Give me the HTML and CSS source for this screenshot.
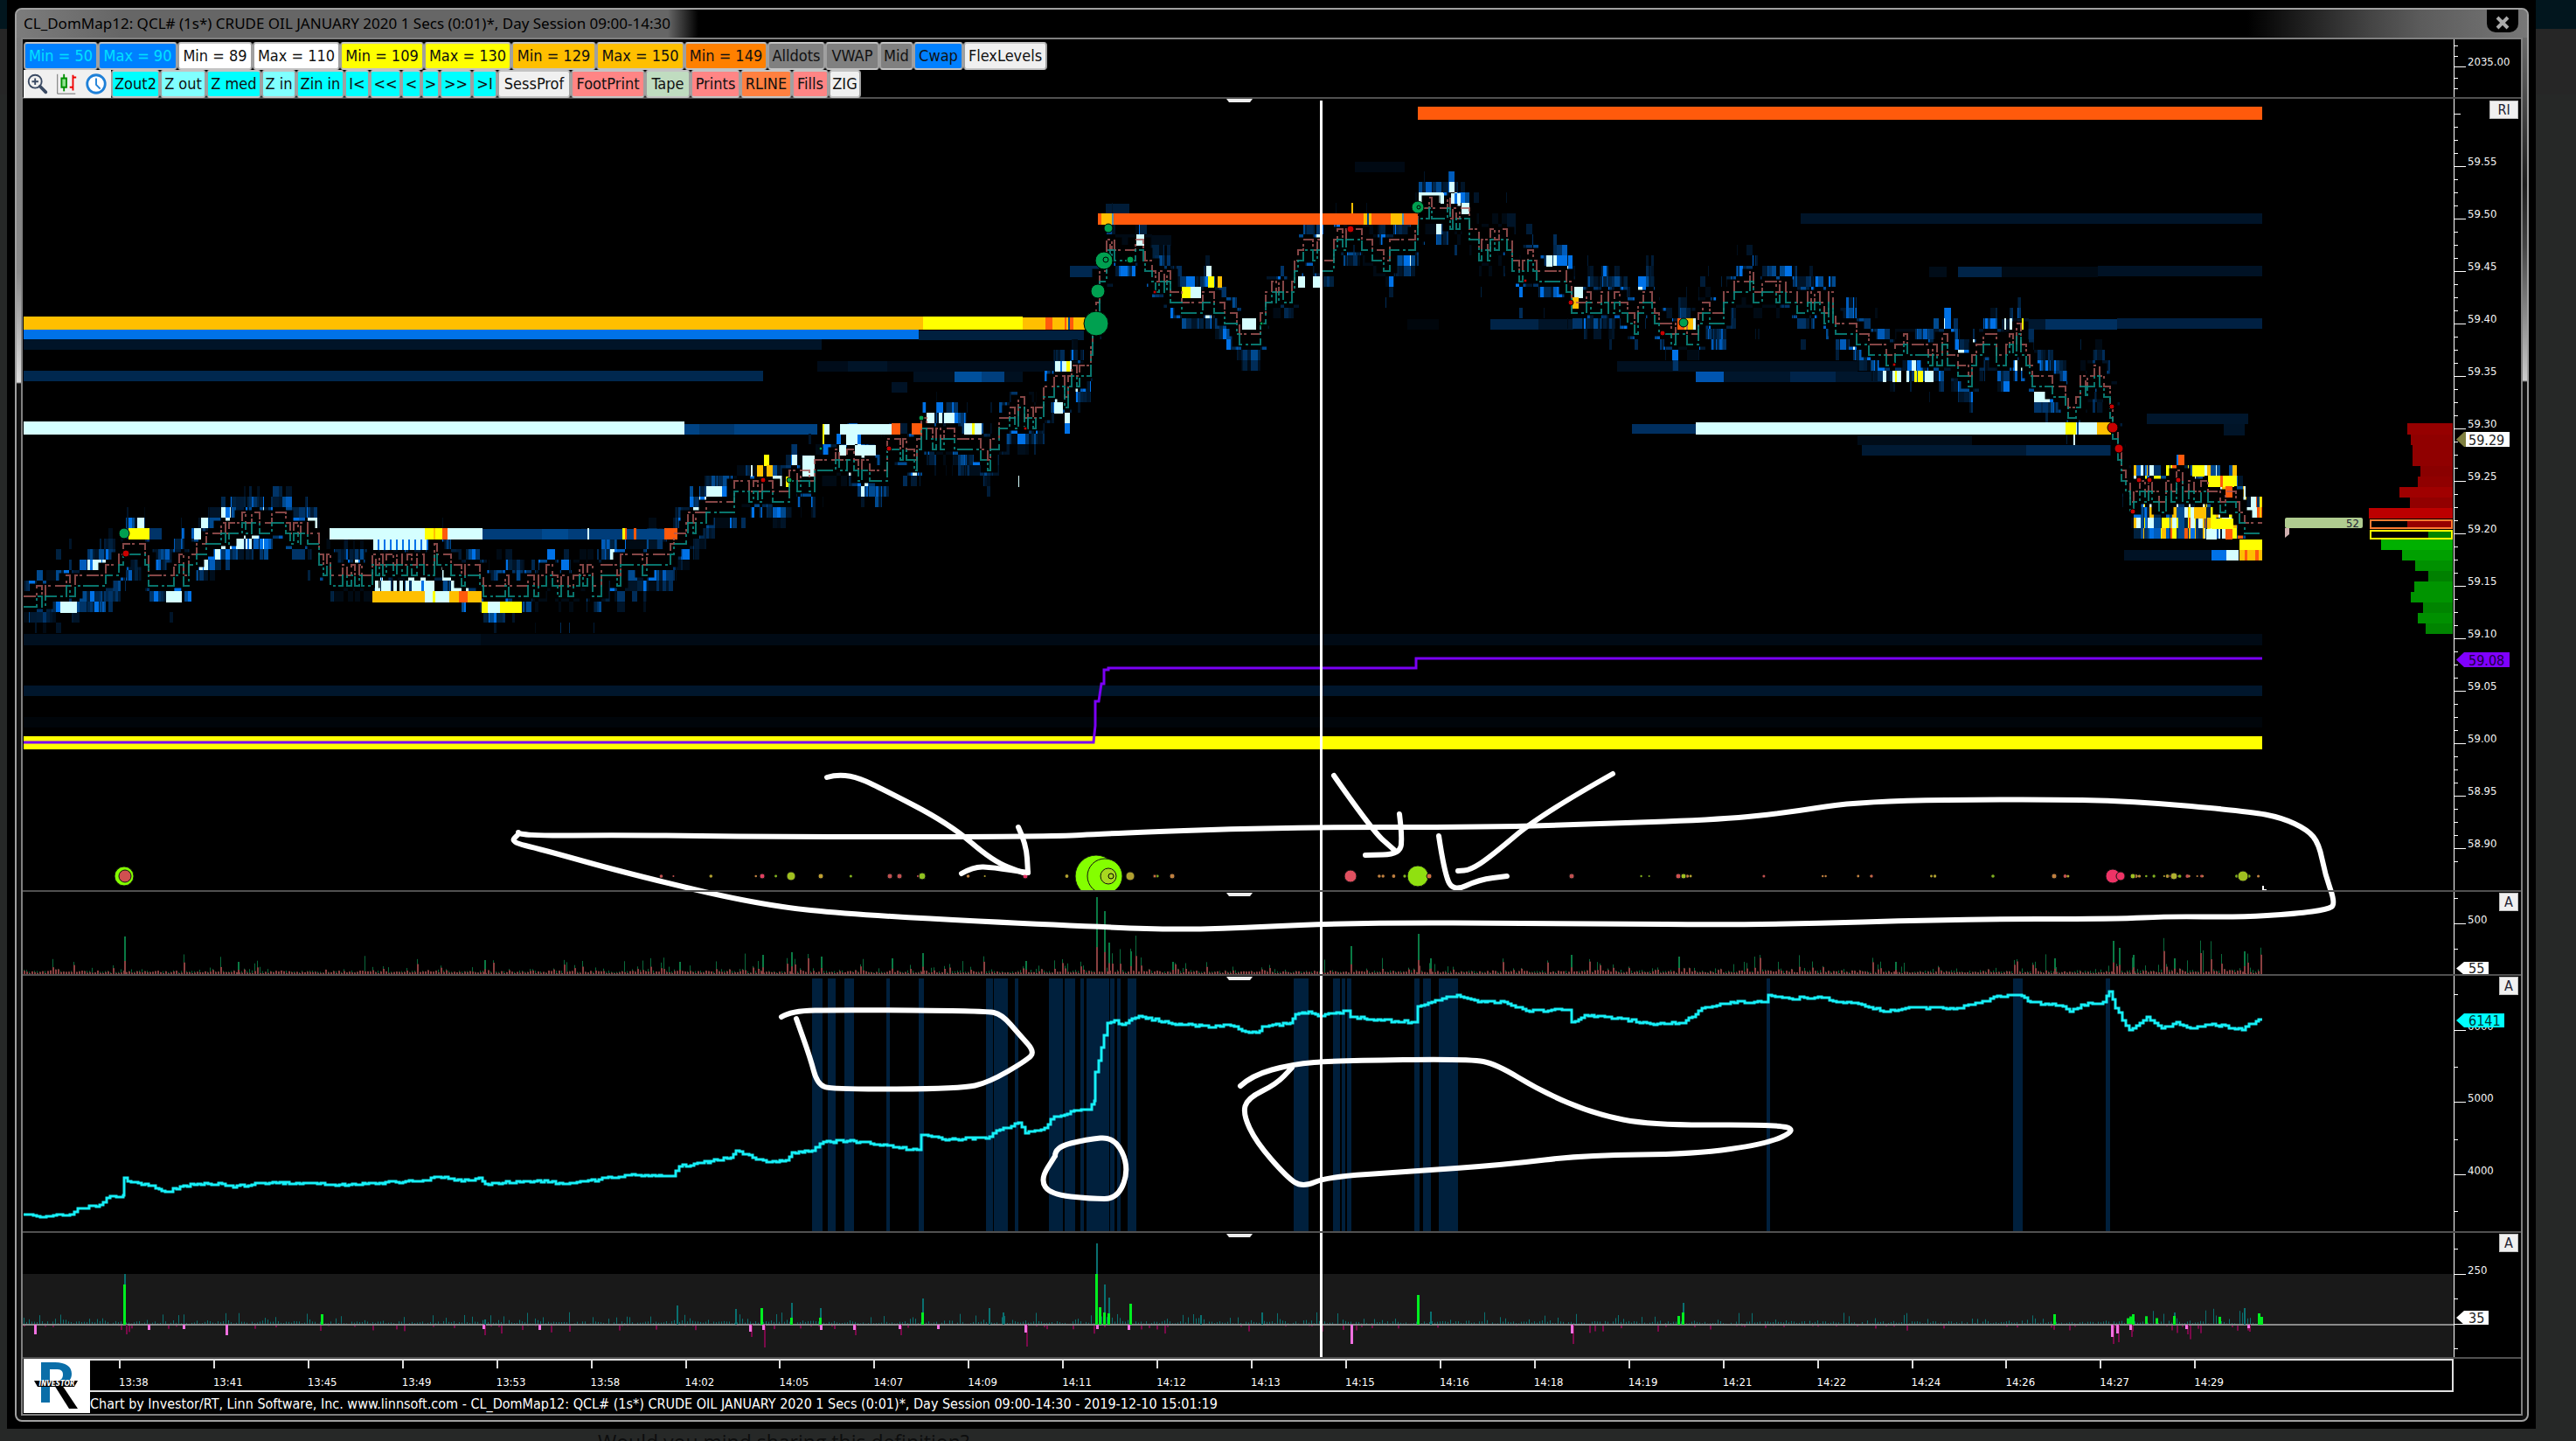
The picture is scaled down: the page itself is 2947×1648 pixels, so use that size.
FILE: index.html
```html
<!DOCTYPE html>
<html lang="en">
<head>
<meta charset="utf-8">
<title>CL_DomMap12</title>
<link rel="stylesheet" href="styles.css">
</head>
<body>
<div class="page">
  <div class="window">
    <div class="frame">
      <header class="titlebar">
        <h1 class="title">CL_DomMap12: QCL# (1s*) CRUDE OIL JANUARY 2020 1 Secs (0:01)*, Day Session 09:00-14:30</h1>
        <button class="close" aria-label="Close"><svg viewBox="0 0 16 16" width="16" height="16"><path d="M2 2 L14 14 M14 2 L2 14" stroke="#aaa" stroke-width="4"/></svg></button>
      </header>
      <main class="client">
        <div class="stack">
          <svg class="plot" id="plot" viewBox="26 45 2781 1509" preserveAspectRatio="none" aria-label="Order book heat map"></svg>
          <svg class="axis" id="axis" viewBox="2807 45 77 1509" preserveAspectRatio="none" aria-label="Scales"></svg>
          <section class="panel">
            <div class="toolbars">
              <div class="toolbar levels">
                <button class="blue">Min = 50</button><button class="blue">Max = 90</button><button class="white">Min = 89</button><button class="white">Max = 110</button><button class="yellow">Min = 109</button><button class="yellow">Max = 130</button><button class="gold">Min = 129</button><button class="gold">Max = 150</button><button class="orange">Min = 149</button><button class="gray">Alldots</button><button class="gray">VWAP</button><button class="gray">Mid</button><button class="cwap">Cwap</button><button class="light">FlexLevels</button>
              </div>
              <div class="toolbar tools">
                <button class="light icon" aria-label="Zoom"><svg viewBox="0 0 30 30" width="28" height="28"><circle cx="12" cy="12" r="8" fill="none" stroke="#3a4a63" stroke-width="2"/><path d="M12 8v8M8 12h8" stroke="#3a4a63" stroke-width="2"/><path d="M18 18l7 7" stroke="#3a4a63" stroke-width="4" stroke-linecap="round"/></svg></button>
                <button class="light icon" aria-label="Bars"><svg viewBox="0 0 30 30" width="28" height="28"><path d="M4 3v24h22" fill="none" stroke="#666" stroke-width="1"/><path d="M12 3v21" stroke="#009000" stroke-width="2"/><path d="M9 8h6v11h-6z" fill="#8fe08f" stroke="#009000" stroke-width="2"/><path d="M23 4v19M23 7h4M19 19h4" stroke="#f00000" stroke-width="2"/></svg></button>
                <button class="light icon" aria-label="Time"><svg viewBox="0 0 30 30" width="28" height="28"><circle cx="15" cy="15" r="11" fill="#fff" stroke="#1e80d8" stroke-width="3"/><path d="M15 8v8l5 5" fill="none" stroke="#1e80d8" stroke-width="2"/></svg></button>
                <button class="cyan">Zout2</button><button class="pale">Z out</button><button class="cyan">Z med</button><button class="pale">Z in</button><button class="cyan">Zin in</button><button class="cyan">I&lt;</button><button class="cyan">&lt;&lt;</button><button class="cyan">&lt;</button><button class="cyan">&gt;</button><button class="cyan">&gt;&gt;</button><button class="cyan">&gt;I</button><button class="light">SessProf</button><button class="pink">FootPrint</button><button class="sage">Tape</button><button class="pink">Prints</button><button class="coral">RLINE</button><button class="pink">Fills</button><button class="light">ZIG</button>
              </div>
            </div>
          </section>
          <section class="panel"><button class="corner wide">RI</button></section>
          <section class="panel"><button class="corner">A</button></section>
          <section class="panel"><button class="corner">A</button></section>
          <section class="panel"><button class="corner">A</button></section>
        </div>
        <footer class="footer">
          <svg class="logo" viewBox="0 0 76 62" width="76" height="62" aria-label="Investor/RT">
            <rect width="76" height="62" fill="#fff"/>
            <path d="M20 4h16c12 0 19 5 19 13 0 7-4 10-9 12H30v21H20z M30 12v13h7c5 0 8-2 8-7s-3-6-8-6z" fill="#0a6ea8" fill-rule="evenodd"/>
            <path d="M35 30h9l18 27h-10z" fill="#000"/>
            <path d="M12 25h50l-4 7H16z" fill="#000"/>
            <text x="38" y="31" text-anchor="middle" class="logo-text">INVESTOR</text>
          </svg>
          <ol class="times" id="times"></ol>
          <p class="credit">Chart by Investor/RT, Linn Software, Inc. www.linnsoft.com - CL_DomMap12: QCL# (1s*) CRUDE OIL JANUARY 2020 1 Secs (0:01)*, Day Session 09:00-14:30 - 2019-12-10 15:01:19</p>
        </footer>
      </main>
    </div>
  </div>
  <p class="question">Would you mind sharing this definition?</p>
</div>
<script src="chart.js"></script>
</body>
</html>
```
FILE: styles.css
```css
* { box-sizing: border-box; }
body { margin: 0; background: #262827; font-family: "DejaVu Sans Condensed", "DejaVu Sans", sans-serif; }
.page {
  height: 100vh; overflow: hidden; display: flex; flex-direction: column;
  padding: 0 46px 0 8px;
  background: linear-gradient(#02161e 0 33px, #262626 33px 108px, #262827 108px);
}
.window { flex: 1 1 0; display: flex; background: #000; padding: 9px 8px 8px 9px; min-width: 0; min-height: 0; }
.frame {
  flex: 1; min-width: 0; display: flex; flex-direction: column;
  border: 2px solid #a0a0a0; border-radius: 8px;
  background:
    linear-gradient(#777 0, #8a8a8a 300px, #ddd 426px, #101010 428px) left / 6px 100% no-repeat,
    linear-gradient(#777 0, #555 80px, #1c1c1c 200px, #444 270px, #ccc 424px, #101010 426px) right / 6px 100% no-repeat,
    #0c0c0c;
}
.titlebar {
  flex: none; height: 32px; display: flex; justify-content: space-between; align-items: center; padding-left: 8px;
  border-radius: 6px 6px 0 0;
  background: linear-gradient(90deg, #7c7c7c 0, #666 120px, #666 745px, rgba(30,30,30,0) 780px),
    linear-gradient(270deg, #777 0, #5c5c5c 120px, #444 180px, #000 320px), #050505;
}
.title { margin: 0; font: 400 17px/32px "Noto Sans", sans-serif; color: #000; white-space: nowrap; }
.close {
  width: 36px; height: 26px; padding: 3px 0 0; border: 0; margin-right: 10px; align-self: flex-start;
  border-radius: 0 0 10px 10px; background: #000; line-height: 0;
}
.client {
  flex: 1; min-height: 0; display: flex; flex-direction: column; margin: 0 5px 5px; border: 2px solid #808080; background: #000;
}
.stack {
  position: relative; flex: 1 1 0; min-height: 0; display: grid;
  grid-template-rows: minmax(0, 68fr) minmax(0, 907fr) minmax(0, 96fr) minmax(0, 294fr) minmax(0, 144fr);
}
.plot { position: absolute; left: 0; top: 0; width: calc(100% - 77px); height: 100%; }
.axis { position: absolute; right: 0; top: 0; width: 77px; height: 100%; }
.panel { position: relative; border-bottom: 2px solid #505050; display: flex; flex-direction: column; min-height: 0; }
.toolbars { padding: 3px 0 0 1px; }
.toolbar { display: grid; height: 32px; }
.levels { grid-template-columns: 85px 91px 86px 100px 96px 100px 97px 101px 95px 66px 62px 39px 57px 96px; }
.tools { grid-template-columns: 32px 34px 34px 56px 53px 63px 40px 55px 29px 36px 23px 21px 37px 29px 84px 85px 52px 57px 59px 42px 37px; }
.toolbar button {
  border: 2px solid #a8a8a8; border-color: #c4c4c4 #a0a0a0; border-radius: 4px; padding: 0; overflow: hidden; color: #111;
  font: 18px/26px "DejaVu Sans Condensed", "DejaVu Sans", sans-serif; white-space: nowrap;
  display: flex; justify-content: center; align-items: center;
}
.toolbar .icon { border: 0; border-radius: 0; }
.toolbar .blue { background: #0080ff; color: #00e0ff; }
.toolbar .cwap { background: #0080ff; }
.toolbar .white { background: #fff; }
.toolbar .yellow { background: #ff0; }
.toolbar .gold { background: #ffbf00; }
.toolbar .orange { background: #ff8000; }
.toolbar .gray { background: #808080; }
.toolbar .light { background: #f0f0f0; }
.toolbar .cyan { background: #0ff; }
.toolbar .pale { background: #80ffff; }
.toolbar .pink { background: #ff8585; }
.toolbar .sage { background: #c0dcc0; }
.toolbar .coral { background: #ff8040; }
.corner {
  align-self: flex-end; margin: 1px 3px 0 0; width: 22px; height: 21px; padding: 0;
  border: 1px solid #bbb; background: #f0f0f0; color: #223;
  font: 16px/18px "DejaVu Sans Condensed", "DejaVu Sans", sans-serif;
}
.wide { width: 33px; margin-top: 2px; }
.footer { flex: none; display: grid; grid-template: 38px 25px / 77px 1fr; }
.logo { grid-row: 1 / 3; margin-left: 1px; display: block; }
.logo-text { font: italic 700 8px "DejaVu Sans Condensed", sans-serif; fill: #fff; }
.times {
  display: flex; list-style: none; margin: 0 77px 0 0; padding: 0 0 0 33px;
  border: 2px solid #e0e0e0; border-left: 0;
}
.times::after { content: ""; flex: 187 0 0; }
.times li { flex: 108 0 0; min-width: 0; font-size: 13px; line-height: 14px; color: #fff; }
.times li::before { content: ""; display: block; width: 2px; height: 9px; margin-bottom: 9px; background: #ddd; }
.credit { margin: 0; color: #fff; font-size: 16px; line-height: 28px; white-space: nowrap; }
.question { flex: none; height: 14px; margin: 0 0 0 676px; font: 23px/30px "Open Sans", sans-serif; color: #0c0d0d; white-space: nowrap; }
.scale-text { font: 13px "DejaVu Sans Condensed", "DejaVu Sans", sans-serif; fill: #f4f4f4; }
.tag-text { font: 16px "DejaVu Sans Condensed", "DejaVu Sans", sans-serif; }
```
FILE: chart.js
```js
const plot = document.getElementById('plot');
const axis = document.getElementById('axis');
let seed = 20191210;
const rnd = () => {
  seed = (seed + 0x6D2B79F5) | 0;
  let t = Math.imul(seed ^ (seed >>> 15), 1 | seed);
  t = (t + Math.imul(t ^ (t >>> 7), 61 | t)) ^ t;
  return ((t ^ (t >>> 14)) >>> 0) / 4294967296;
};
const pick = list => list[Math.floor(rnd() * list.length)];
let out = '';
const rect = (x1, y1, x2, y2, c) => { out += `<rect x="${x1}" y="${y1}" width="${x2 - x1}" height="${y2 - y1}" fill="${c}"/>`; };
const line = (d, c, w = 2, extra = '') => { out += `<path d="${d}" fill="none" stroke="${c}" stroke-width="${w}" ${extra}/>`; };
const dot = (x, y, r, c, stroke = 'none') => { out += `<circle cx="${x}" cy="${y}" r="${r}" fill="${c}" stroke="${stroke}"/>`; };

const ICE = '#d5ffff', YEL = '#ffff00', GOLD = '#ffbf00', ORG = '#ff5a0c', BLUE = '#0072e8', MID = '#004a90', DEEP = '#00284f', NIGHT = '#001428';

/* resting liquidity: [x1, x2, y1, y2, colour] */
const bars = [
  [1622, 2588, 122, 137, ORG],
  [27, 1056, 362, 377, GOLD], [1056, 1170, 362, 377, YEL], [1170, 1242, 363, 377, GOLD], [1196, 1204, 363, 377, ORG], [1218, 1220, 363, 377, ORG], [1222, 1224, 363, 377, MID], [1224, 1228, 363, 377, ORG],
  [27, 1051, 377, 388, BLUE], [1051, 1240, 378, 389, '#00203f'],
  [27, 940, 388, 400, NIGHT], [935, 1240, 413, 425, '#000c1a'], [970, 1015, 413, 425, NIGHT],
  [27, 873, 424, 436, DEEP], [1045, 1170, 425, 437, '#001020'], [1092, 1123, 425, 437, '#00509c'], [1123, 1149, 425, 437, '#003f7e'],
  [1020, 1038, 437, 449, '#001225'],
  [27, 783, 482, 497, ICE], [783, 935, 485, 497, '#004384'], [800, 840, 485, 497, '#00386f'],
  [27, 2588, 725, 738, '#000a15'], [27, 550, 725, 738, '#001020'], [27, 2588, 784, 796, '#00162c'], [27, 2588, 820, 832, '#00050a'],
  [27, 2588, 842, 857, YEL],
  [1546, 1548, 232, 244, GOLD],
  [1265, 1292, 233, 244, '#001c38'], [1224, 1262, 304, 317, '#002850'], [1310, 1340, 269, 281, '#000c18'],
  [1550, 1607, 185, 197, '#000913'], [1610, 1646, 365, 377, '#00060c'],
  [2060, 2588, 244, 256, NIGHT], [2207, 2227, 305, 317, '#000c18'], [2240, 2290, 305, 317, '#002448'], [2290, 2400, 305, 317, '#000a14'], [2400, 2588, 304, 316, '#001225'],
  [2290, 2340, 365, 377, '#001830'], [2340, 2422, 365, 377, '#003060'], [2422, 2588, 364, 376, '#002042'],
  [1705, 1760, 365, 377, '#002448'], [1760, 1800, 365, 377, NIGHT],
  [1850, 2125, 413, 425, '#000f1f'], [1940, 1972, 425, 437, '#0055b0'], [1972, 2155, 425, 437, '#00162c'], [2048, 2100, 425, 437, '#00244a'],
  [1867, 1940, 485, 496, '#002f60'],
  [2125, 2256, 498, 509, '#000c18'], [2130, 2320, 509, 521, '#001a34'], [2318, 2418, 509, 521, '#002850'],
  [2456, 2572, 473, 485, '#00162c'], [2544, 2568, 485, 498, NIGHT]
];
bars.forEach(([a, b, c, d, e]) => rect(a, c, b, d, e));

/* best offer by time, in ticks below 59.40 */
const ask = [[27,26],[42,25],[48,26],[52,25],[76,24],[80,25],[86,24],[121,23],[136,22],[141,21],[166,22],[170,24],[199,23],[205,22],[210,24],[216,22],[225,21],[236,20],[253,19],[258,20],[262,19],[277,18],[281,19],[288,18],[297,19],[311,18],[327,19],[332,20],[336,19],[341,20],[344,19],[352,20],[365,22],[370,23],[374,22],[378,24],[392,23],[397,24],[402,23],[406,24],[411,23],[414,24],[426,22],[430,23],[434,22],[438,23],[442,22],[450,23],[454,22],[460,23],[466,22],[471,23],[477,22],[485,23],[497,21],[500,22],[516,23],[528,24],[532,23],[549,24],[553,25],[578,24],[582,25],[604,24],[611,25],[616,24],[625,23],[632,24],[638,25],[642,24],[650,25],[656,24],[663,23],[667,24],[672,23],[678,25],[688,23],[706,24],[710,22],[735,23],[740,22],[767,21],[771,20],[785,19],[787,18],[793,19],[796,18],[808,17],[840,15],[857,16],[862,15],[867,16],[872,15],[884,16],[903,14],[912,15],[916,14],[926,15],[932,13],[936,13],[956,12],[960,13],[969,12],[977,13],[982,14],[986,13],[995,14],[1015,11],[1030,12],[1033,11],[1037,12],[1046,13],[1049,11],[1054,9],[1060,10],[1067,11],[1071,10],[1076,11],[1080,10],[1092,11],[1122,12],[1130,13],[1133,11],[1143,9],[1155,8],[1161,9],[1165,7],[1172,9],[1176,8],[1182,9],[1185,8],[1194,6],[1206,5],[1218,7],[1222,5],[1226,4],[1232,5],[1235,4],[1248,2],[1250,0],[1254,-2],[1258,-5],[1266,-8],[1270,-7],[1272,-8],[1275,-7],[1299,-8],[1308,-7],[1310,-6],[1318,-5],[1322,-4],[1326,-5],[1332,-4],[1335,-5],[1339,-3],[1352,-2],[1376,-3],[1389,-2],[1401,-1],[1415,0],[1418,1],[1442,-1],[1448,-3],[1455,-4],[1460,-3],[1463,-4],[1468,-3],[1478,-4],[1481,-6],[1485,-7],[1491,-8],[1502,-7],[1507,-8],[1512,-6],[1526,-8],[1530,-9],[1536,-8],[1540,-9],[1558,-8],[1570,-7],[1583,-6],[1590,-8],[1619,-9],[1622,-11],[1635,-12],[1638,-11],[1656,-12],[1659,-10],[1662,-11],[1666,-10],[1670,-11],[1681,-9],[1692,-7],[1695,-8],[1702,-7],[1705,-9],[1710,-8],[1715,-9],[1724,-8],[1730,-6],[1738,-5],[1742,-6],[1748,-7],[1754,-6],[1758,-5],[1792,-4],[1798,-2],[1811,-2],[1815,-3],[1820,-2],[1832,-3],[1840,-2],[1847,-3],[1853,-2],[1862,-1],[1866,-1],[1870,0],[1874,-2],[1880,-3],[1890,-2],[1893,-1],[1898,0],[1912,1],[1917,0],[1930,1],[1943,-1],[1948,-2],[1956,-1],[1972,-3],[1984,-4],[2002,-5],[2006,-3],[2016,-4],[2032,-3],[2036,-4],[2043,-3],[2056,-2],[2068,-3],[2072,-2],[2076,-3],[2082,-2],[2087,-1],[2092,-3],[2097,-1],[2100,0],[2124,1],[2138,2],[2158,3],[2168,2],[2178,1],[2182,2],[2206,3],[2211,2],[2216,3],[2222,1],[2228,3],[2240,4],[2252,5],[2256,3],[2261,2],[2269,1],[2284,3],[2295,2],[2299,1],[2303,2],[2307,0],[2312,2],[2318,3],[2322,4],[2325,5],[2348,6],[2363,7],[2366,8],[2375,7],[2380,5],[2386,6],[2388,5],[2396,4],[2402,5],[2407,6],[2414,8],[2417,10],[2423,12],[2427,14],[2432,15],[2437,17],[2441,16],[2448,15],[2454,16],[2458,15],[2462,16],[2470,17],[2478,15],[2484,16],[2490,14],[2497,16],[2504,15],[2510,16],[2518,15],[2526,16],[2540,17],[2546,16],[2558,17],[2562,18],[2568,19],[2588,19]];
const yOf = k => 370 + 12 * k;
let heat = {};
const cell = (x, w, k, c) => { (heat[c] = heat[c] || []).push(`M${x} ${yOf(k) - 6}h${w}v12h-${w}z`); };
const flush = () => { for (const c in heat) out += `<path d="${heat[c].join('')}" fill="${c}"/>`; heat = {}; };
const cool = ['#001428', '#001a34', '#00213f', DEEP, '#003468', '#003468', MID, MID, '#005cbc', BLUE];
const dim = ['#000a14', '#000e1c', NIGHT, NIGHT, '#001c38', '#00213f', '#002c58'];
const hot = [YEL, YEL, YEL, GOLD, GOLD, ICE, ICE, ICE, ORG, BLUE, MID];
const kAt = x => { let k = 26; for (const p of ask) { if (p[0] > x) break; k = p[1]; } return k; };
let above = 0, below = 0;
for (let x = 27; x < 2588;) {
  const w = 1 + Math.floor(rnd() * rnd() * 9);
  const k = kAt(x);
  if (rnd() < .16) above = rnd();
  if (rnd() < .16) below = rnd();
  const shade = s => s > .87 ? (rnd() < .7 ? ICE : BLUE) : s < .12 ? '#000a14' : pick(cool);
  if (x > 2440) {
    const heatUp = x > 2530 ? .95 : .7;
    cell(x, w, k - 1, rnd() < heatUp ? pick(hot) : pick(cool));
    if (k > 15) cell(x, w, k - 2, rnd() < heatUp * .7 ? pick(hot) : pick(cool));
    for (let j = k + 2; j < 21; j++) cell(x, w, j, rnd() < (j < 20 ? heatUp : .35) ? pick(hot) : pick(cool));
  } else {
    cell(x, w, k - 1, shade(above));
    if (above > .45) cell(x, w, k - 2, pick(above > .75 ? cool : dim));
    cell(x, w, k + 2, shade(below));
    if (below > .45) cell(x, w, k + 3, pick(below > .75 ? cool : dim));
    if (rnd() < .06) cell(x, w, k + 4, pick(dim));
    if (rnd() < .06) cell(x, w, k - 3, pick(dim));
  }
  x += w;
}
flush();

/* cleared lane between bid and offer */
const trace = off => ask.map(([x, k], i) => `${i ? 'H' + x + 'V' : 'M' + x + ' '}${yOf(k + off)}`).join('') + 'H2588';
line(trace(.5), '#000', 17);

/* brighter blocks next to the touch */
[[377,486,604,617,ICE],[486,506,604,617,YEL],[496,498,604,617,GOLD],[506,512,604,617,ORG],[512,552,604,617,ICE],[552,712,605,617,'#003d7a'],[620,650,605,617,'#004a90'],[672,674,604,617,ICE],[712,715,604,617,YEL],[715,717,604,617,ORG],[717,760,605,617,'#004384'],[725,728,604,617,ORG],[760,775,604,617,ORG],
[426,486,676,689,GOLD],[486,503,676,689,ICE],[495,498,676,689,YEL],[503,514,676,689,ICE],[514,525,676,689,GOLD],[525,535,676,689,ORG],[535,551,676,689,GOLD],[551,597,688,701,YEL],[558,572,688,701,ICE],[572,580,688,701,YEL],
[147,171,604,617,YEL],[157,165,592,604,ICE],[171,185,604,617,'#003468'],[230,238,592,604,ICE],[222,230,604,617,ICE],[69,88,688,701,ICE],[190,208,676,689,ICE],
[866,873,532,545,GOLD],[874,880,520,533,YEL],[877,884,532,545,GOLD],[859,861,532,545,ICE],[943,949,485,497,ICE],[941,943,485,508,YEL],[961,1020,485,497,ICE],[968,978,497,509,ICE],[1020,1030,484,497,ORG],[1043,1055,484,497,ORG],[960,968,509,521,ICE],[978,1002,509,521,ICE],[918,932,521,545,ICE],[1060,1069,472,484,ICE],[1074,1078,472,484,ICE],[1080,1092,472,484,ICE],[1103,1123,484,497,ICE],[1112,1115,484,497,YEL],[899,904,545,557,YEL],
[1206,1216,460,473,ICE],[1207,1226,413,425,ICE],[1220,1224,413,425,YEL],[1213,1215,413,425,BLUE],[1165,1166,544,557,ICE],
[1300,1309,268,281,ICE],[1352,1362,328,341,YEL],[1362,1374,328,341,ICE],[1382,1389,316,329,YEL],[1393,1398,316,329,GOLD],[1380,1386,304,316,ICE],[1421,1437,364,377,ICE],[1485,1493,316,329,ICE],[1502,1511,316,329,ICE],[1648,1652,221,233,ICE],[1660,1671,221,233,ICE],[1664,1667,221,233,BLUE],[1672,1681,232,245,ICE],[1769,1776,292,305,ICE],[1801,1811,328,341,ICE],[1799,1806,340,353,GOLD],
[1919,1940,364,377,ORG],[1927,1938,364,377,GOLD],[1937,1940,364,377,ICE],[2154,2158,424,437,ICE],[2165,2175,424,437,ICE],[2168,2170,424,437,YEL],[2181,2184,424,437,ICE],[2190,2200,424,437,YEL],[2193,2194,424,437,MID],[2202,2212,424,437,ICE],[2293,2295,364,377,ICE],[2299,2302,364,377,ICE],[2313,2315,364,377,YEL],
[1940,2415,483,497,ICE],[2363,2375,483,497,YEL],[2376,2378,483,497,MID],[2399,2415,483,497,GOLD],[2372,2374,497,509,ICE],
[2508,2522,532,545,YEL],[2526,2556,544,557,YEL],[2540,2543,544,557,ORG],[2546,2554,556,569,ORG],[2510,2524,580,593,GOLD],[2530,2555,593,605,YEL],[2546,2554,605,617,ORG],[2524,2536,605,617,ICE],[2430,2547,617,629,'#000'],[2430,2530,629,641,'#001225'],[2530,2547,629,641,BLUE],[2547,2561,629,641,ICE],[2562,2588,629,641,GOLD],[2568,2571,629,641,ORG],[2580,2584,629,641,ORG],[2562,2588,617,629,YEL]
].forEach(([a, b, c, d, e]) => rect(a, c, b, d, e));
for (let x = 427; x < 485; x += 7) { rect(x, 617, x + 5, 629, ICE); rect(x + 5, 617, x + 7, 629, BLUE); rect(x + 2, 664, x + 6, 676, ICE); }

line(trace(0), '#a85858', 2, 'stroke-dasharray="14 2 3 5" stroke-opacity=".8"');
line(trace(1), '#0a8a80', 2, 'stroke-dasharray="18 4 3 3" stroke-opacity=".85"');

rect(1256, 244, 1622, 257, ORG);
rect(1260, 244, 1272, 257, GOLD); rect(1272, 244, 1274, 257, '#5090b0');
rect(1560, 244, 1569, 257, GOLD); rect(1564, 244, 1566, 257, MID);
rect(1591, 244, 1604, 257, GOLD); rect(1604, 244, 1606, 257, '#5090b0');
const G = '#00a050', R = '#c80000';
[[142,610,6,G],[144,633,4,R],[1254,370,14,G],[1263,298,10,G],[1256,333,8,G],[1268,261,5,G],[1293,297,4,G],[1622,237,7,G],[1545,262,4,R],[1797,346,3,R],[2417,489,6,R],[2424,513,5,R],[1926,369,5,G],[1054,478,3,G],[903,549,3,G],[873,549,3,R],[939,513,2,G],[1017,513,3,R],[1173,490,2,R],[1902,381,3,R],[2167,417,2,R],[2447,549,3,R],[2459,549,3,R],[2492,549,3,R],[2440,585,3,R],[2416,465,3,R],[1321,334,2,R],[1443,370,2,G],[1745,321,2,R]].forEach(([x, y, r, c]) => dot(x, y, r, c, '#000'));
dot(1265, 297, 3, G, '#000'); dot(1623, 237, 2, G, '#000');

/* volume weighted level */
line('M27 849H1251L1253 830V802H1257L1260 782H1263V766H1268V764H1620V753H2588', '#7a00f5', 3);

/* trade bubbles */
const LIME = '#84ff00';
for (let i = 0; i < 60; i++) { const x = i < 35 ? 700 + rnd() * 1700 : 2420 + rnd() * 165; dot(x, 1002, 1 + rnd(), pick(['#b0a030', '#c08040', '#80b020', '#c05050'])); }
[[142,11,LIME],[143,7,'#d05050'],[1254,24,LIME],[1264,20,LIME],[1268,9,'#a8d820'],[1293,5,'#b0a030'],[1321,2,'#d07040'],[1341,3,'#c08040'],[1545,7,'#e05060'],[1622,12,'#90e010'],[1635,3,'#d07040'],[872,3,'#e04060'],[905,5,'#a0c020'],[939,3,'#c0a030'],[1018,3,'#c05050'],[1029,3,'#c05050'],[1055,4,'#90c020'],[1173,3,'#e03060'],[1798,3,'#c05050'],[1920,3,'#d05050'],[1926,3,'#a0c020'],[2417,8,'#ee3366'],[2426,5,'#ee3366'],[2350,3,'#c08040'],[2440,3,'#a0c020'],[2487,4,'#b0b030'],[2566,6,'#a0c020']].forEach(([x, r, c]) => dot(x, 1002, r, c, '#111'));
dot(1271, 1002, 3, '#a8d820', '#000');
line('M2589 1013V1018H2593', '#fff', 2);
rect(26, 1020, 2807, 1056, '#000');

/* volume */
const hist = (x, base, h, c, w = 2) => rect(x, base - h, x + w, base, c);
for (let x = 27; x < 2588; x += 3) {
  const busy = x > 2415 ? 2 : x > 1250 && x < 1300 ? 2 : 1;
  const h = 2 + Math.pow(rnd(), 9) * 20 * busy + rnd() * 2 * busy;
  hist(x, 1114, h, '#0a6a3c', 1); hist(x, 1114, h * rnd() * .8 + 1, '#8a4040');
}
[[142,43],[272,14],[554,16],[777,14],[872,22],[905,25],[939,20],[1020,18],[1055,24],[1173,15],[1254,88],[1263,72],[1268,36],[1293,26],[1341,14],[1545,32],[1622,46],[1636,18],[1797,22],[1920,20],[2350,18],[2417,38],[2424,30],[2440,22],[2487,18],[2567,26],[2168,14]].forEach(([x, h]) => { hist(x, 1114, h, '#0a7a44'); hist(x, 1114, h * .35, '#8a4040'); });

/* cumulative delta */
[[929,941],[947,956],[966,977],[1014,1018],[1051,1057],[1128,1136],[1137,1153],[1161,1165],[1200,1216],[1218,1230],[1236,1240],[1243,1269],[1270,1275],[1278,1282],[1290,1300],[1480,1497],[1525,1533],[1535,1539],[1541,1546],[1618,1624],[1628,1637],[1646,1668],[2021,2025],[2303,2314],[2409,2414]].forEach(([a, b]) => rect(a, 1119, b, 1410, '#00203d'));
const cvd = [27,1389,42,1391,80,1389,89,1382,114,1378,122,1370,141,1367,142,1347,150,1352,174,1356,189,1363,206,1357,226,1354,254,1354,267,1358,292,1353,359,1353,384,1356,426,1353,476,1351,501,1346,528,1351,548,1347,555,1354,615,1350,648,1354,685,1349,719,1344,769,1345,777,1334,802,1330,836,1324,842,1316,861,1324,877,1329,899,1327,906,1318,929,1316,942,1306,969,1305,1011,1309,1029,1313,1053,1315,1054,1298,1078,1303,1128,1302,1136,1296,1165,1284,1173,1296,1195,1290,1206,1277,1233,1270,1245,1269,1252,1259,1253,1226,1257,1213,1263,1184,1267,1170,1275,1167,1284,1172,1303,1162,1337,1170,1387,1175,1404,1172,1429,1181,1441,1179,1444,1174,1476,1170,1482,1160,1497,1157,1512,1162,1541,1156,1545,1163,1580,1167,1619,1169,1622,1151,1638,1146,1667,1138,1691,1146,1721,1146,1746,1156,1795,1155,1798,1169,1813,1161,1855,1165,1888,1171,1925,1170,1947,1153,1980,1146,2019,1146,2023,1138,2047,1142,2080,1140,2105,1146,2130,1149,2155,1157,2180,1153,2239,1153,2264,1147,2281,1140,2309,1138,2323,1146,2356,1150,2368,1157,2381,1149,2406,1146,2413,1134,2420,1153,2436,1178,2456,1163,2473,1176,2490,1169,2506,1176,2531,1171,2565,1178,2573,1171,2588,1166];
let d = 'M27 1389';
for (let i = 2; i < cvd.length; i += 2) {
  const [x0, y0, x1, y1] = cvd.slice(i - 2, i + 2);
  const n = Math.max(1, Math.round((x1 - x0) / 4));
  for (let j = 1; j <= n; j++) {
    const y = y0 + (y1 - y0) * j / n + (j < n ? Math.round(rnd() * 3 - 1.5) : 0);
    d += `H${Math.round(x0 + (x1 - x0) * j / n)}V${Math.round(y)}`;
  }
}
line(d, '#16f0f8', 3);

/* per-bar delta */
rect(26, 1457, 2807, 1553, '#191919');
for (let x = 27; x < 2588; x += 3) {
  const busy = x > 2415 ? 2 : 1;
  hist(x, 1515, 1 + rnd() * 3 + Math.pow(rnd(), 9) * 12 * busy, '#0a7070', 1);
  if (rnd() < .22) rect(x, 1515, x + 2, 1516 + Math.pow(rnd(), 4) * 10 * busy, '#7a0a4a');
  if (x > 2415 && rnd() < .08) hist(x, 1515, 5 + rnd() * 6, '#00e820', 3);
}
rect(26, 1514, 2807, 1516, '#8a8a8a');
[[142,58,46],[368,12,12],[554,6,0],[774,22,0],[841,18,0],[871,19,19],[905,25,8],[938,19,8],[1055,30,14],[1131,19,0],[1147,14,0],[1254,93,58],[1258,20,20],[1263,46,14],[1268,31,13],[1293,24,24],[1373,11,0],[1443,14,0],[1622,34,34],[1636,15,0],[1925,25,14],[1920,10,10],[2350,12,12],[2440,12,12],[2487,14,10],[2567,19,0],[2584,13,13],[2587,9,9]].forEach(([x, h, g]) => { hist(x, 1515, h, '#0a7070'); if (g) hist(x - 1, 1515, g, '#00ee20', 3); });
[[39,11,0],[142,0,11],[169,6,0],[209,5,0],[258,12,0],[552,5,12],[616,6,0],[857,8,14],[872,6,26],[938,6,0],[976,6,12],[1028,5,12],[1072,5,0],[1172,9,25],[1254,5,0],[1290,6,0],[1545,22,0],[1797,10,22],[2415,14,22],[2421,10,20],[2436,6,14],[2500,5,11],[2571,4,8]].forEach(([x, p, m]) => { if (m) rect(x + 2, 1515, x + 4, 1515 + m, '#7a0a4a'); if (p) rect(x, 1515, x + 3, 1515 + p, '#f070e0'); });

/* resting size profile beside the scale */
[[2754,484,497,'#960000'],[2758,497,509,'#900000'],[2760,509,533,'#900000'],[2769,533,545,'#8a0000'],[2766,545,557,'#900000'],[2745,557,569,'#a00000'],[2757,569,581,'#920000'],[2710,581,593,'#bc0000'],[2754,594,605,'#960000'],[2778,606,617,'#008400'],[2724,617,629,'#00b000'],[2748,629,641,'#00a000'],[2763,641,653,'#009000'],[2778,653,665,'#008000'],[2762,665,677,'#009400'],[2758,677,689,'#009400'],[2772,689,701,'#008400'],[2766,701,713,'#009000'],[2775,713,725,'#008400']].forEach(([x, a, b, c]) => rect(x, a, 2806, b, c));
out += '<rect x="2712" y="595" width="93" height="9" fill="none" stroke="#ff7a30" stroke-width="2"/><rect x="2712" y="607" width="93" height="9" fill="none" stroke="#ffff00" stroke-width="2"/>';
out += '<rect x="2614" y="592" width="89" height="12" rx="2" fill="#b0cc90"/><path d="M2614 604h5v7l-5 4z" fill="#d0b0b0"/><text x="2684" y="603" class="scale-text" style="fill:#223">52</text>';

/* crosshair and pane handles */
rect(1510, 115, 1513, 1553, '#fff');
[113, 1021, 1117, 1411].forEach(y => { out += `<path d="M1403 ${y}h30l-3 4h-24z" fill="#eee"/>`; });

/* pen marks */
const pen = pts => {
  let p = `M${pts[0]} ${pts[1]}`;
  for (let i = 2; i < pts.length - 2; i += 2) p += `Q${pts[i]} ${pts[i + 1]} ${(pts[i] + pts[i + 2]) / 2} ${(pts[i + 1] + pts[i + 3]) / 2}`;
  line(p + `L${pts[pts.length - 2]} ${pts[pts.length - 1]}`, '#fff', 6, 'stroke-linecap="round" stroke-linejoin="round"');
};
[[593,952,593,956,718,955,886,957,1203,957,1270,953,1470,946,1704,946,1838,942,1972,937,2047,929,2130,916,2323,914,2440,916,2573,928,2610,935,2640,949,2653,965,2660,1000,2672,1034,2663,1040,2627,1045,2560,1049,2481,1048,2423,1051,2239,1051,2022,1058,1788,1056,1537,1055,1370,1064,1253,1060,986,1047,869,1035,718,999,618,971,584,963,593,954],
[946,889,956,886,978,888,1003,899,1086,942,1136,985,1170,998],[1165,946,1174,965,1176,998],[1100,999,1114,991,1136,992,1176,998],
[1526,887,1570,950,1595,972],[1601,931,1604,955,1602,977,1562,978],
[1845,885,1763,931,1705,980,1682,995,1668,996],[1646,956,1652,996,1662,1020,1692,1006,1724,1002],
[894,1163,905,1156,960,1155,1128,1156,1146,1160,1166,1183,1184,1203,1174,1213,1131,1238,1100,1245,952,1246,935,1240,927,1210,911,1165],
[1419,1242,1432,1230,1478,1217,1529,1213,1682,1211,1712,1217,1763,1248,1824,1274,1890,1287,2030,1286,2056,1292,2022,1308,1938,1320,1813,1321,1722,1332,1610,1340,1518,1346,1490,1358,1472,1346,1437,1306,1422,1274,1427,1256,1460,1240,1478,1221],
[1207,1322,1207,1312,1243,1303,1275,1300,1292,1335,1279,1371,1248,1371,1202,1366,1190,1349,1207,1322]
].forEach(pen);
plot.innerHTML = out;

/* scales */
out = '';
rect(2807, 45, 2808, 1554, '#fff');
const tick = (y, w) => rect(2807, y - 1, 2807 + w, y, '#fff');
const label = (y, s) => { out += `<text x="2823" y="${y}" class="scale-text">${s}</text>`; };
[53, 65, 90, 102].forEach(y => tick(y, 5));
tick(77, 14); label(75, '2035.00');
tick(131, 8);
for (let i = 0; i < 58; i++) { const y = 131 + 15 * i; if (y > 140 && (y - 191) % 60 && y < 1019) tick(y, 5); }
for (let i = 0; i < 14; i++) { tick(191 + 60 * i, 14); label(189 + 60 * i, (59.55 - .05 * i).toFixed(2)); }
[1028, 1086, 1138, 1221, 1304, 1386, 1429, 1486, 1543].forEach(y => tick(y, 5));
[[1057, '500'], [1179, '6000'], [1261, '5000'], [1344, '4000'], [1458, '250']].forEach(([y, s]) => { tick(y, 14); label(y - 1, s); });
tick(1515, 14);
const tag = (y, h, w, s, bg, tip, fg) => {
  out += `<path d="M2810 ${y + h / 2}l9 -${h / 2}h3v${h}h-3z" fill="${tip}"/>`;
  rect(2821, y, 2821 + w, y + h, bg);
  out += `<text x="2824" y="${y + h - 2}" class="tag-text" fill="${fg}">${s}</text>`;
};
tag(494, 17, 50, '59.29', '#fff', '#808040', '#222');
tag(746, 17, 50, '59.08', '#8000ff', '#8000ff', '#1c0040');
tag(1100, 15, 26, '55', '#fff', '#fff', '#222');
tag(1159, 16, 44, '6141', '#00ffff', '#00ffff', '#033');
tag(1499, 16, 26, '35', '#fff', '#fff', '#222');
axis.innerHTML = out;

document.getElementById('times').innerHTML = '13:38 13:41 13:45 13:49 13:53 13:58 14:02 14:05 14:07 14:09 14:11 14:12 14:13 14:15 14:16 14:18 14:19 14:21 14:22 14:24 14:26 14:27 14:29'.split(' ').map(t => `<li>${t}</li>`).join('');
```
